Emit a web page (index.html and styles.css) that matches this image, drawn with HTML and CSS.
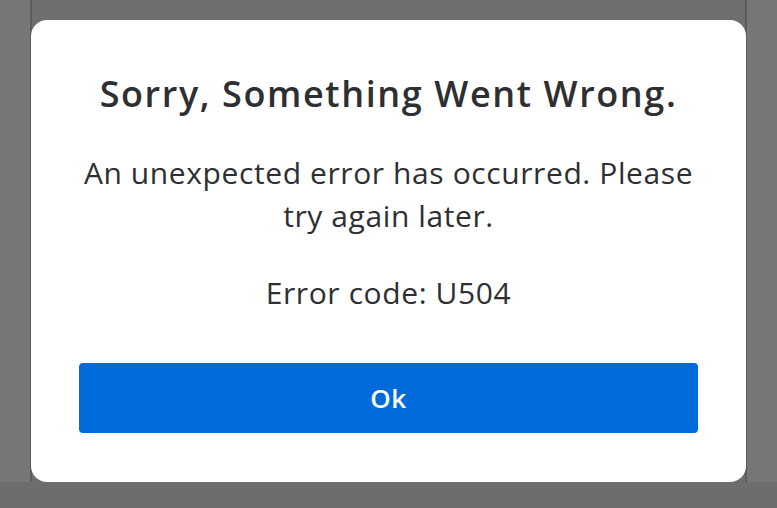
FILE: index.html
```html
<!DOCTYPE html>
<html>
<head>
    <title>Error</title>
    <link rel="stylesheet" href="styles.css">
</head>
<body>
    <div class="backdrop">
        <div class="dialog">
            <h1>Sorry, Something Went Wrong.</h1>
            <p class="message">An unexpected error has occurred. Please<br>try again later.</p>
            <p class="code">Error code: U504</p>
            <button class="ok">Ok</button>
        </div>
    </div>
</body>
</html>
```

FILE: styles.css
```css
body {
    margin: 0;
    height: 508px;
    background: linear-gradient(#777 482px, #6d6d6d 482px);
    font-family: "Open Sans", sans-serif;
    overflow: hidden;
}
.backdrop {
    margin: 0 30px;
    height: 482px;
    padding-top: 20px;
    box-sizing: border-box;
    background: #6e6e6e;
    border-left: 2px solid #5c5c5c;
    border-right: 2px solid #5c5c5c;
}
.dialog {
    margin: 0 -1px;
    height: 462px;
    box-sizing: border-box;
    padding: 52px 40px 0 40px;
    background: #fff;
    border-radius: 16px;
    text-align: center;
    color: #2e2f32;
}
h1 {
    margin: 0;
    font-size: 36px;
    line-height: 44px;
    font-weight: 600;
    letter-spacing: 1.6px;
}
.message {
    margin: 35px 0 0;
    font-size: 30px;
    line-height: 43px;
    letter-spacing: 0.6px;
}
.code {
    margin: 34px 0 0;
    font-size: 30px;
    line-height: 43px;
    letter-spacing: 0.6px;
}
.ok {
    display: block;
    width: calc(100% - 16px);
    height: 70px;
    margin: 49px auto 0;
    background: #016bdc;
    color: #fff;
    border: none;
    border-radius: 4px;
    font-family: inherit;
    font-size: 26px;
    font-weight: 600;
    letter-spacing: 0.5px;
}
```
